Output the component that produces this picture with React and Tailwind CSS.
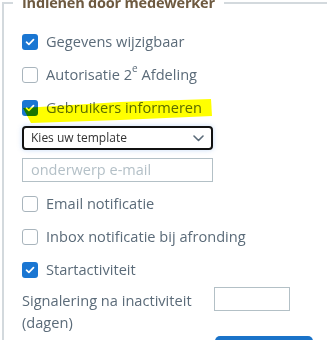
import React from "react";

function Check({ checked }) {
  if (checked) {
    return (
      <span className="flex h-[16px] w-[16px] shrink-0 items-center justify-center rounded-[3px] bg-[#1a76d2]">
        <svg width="10" height="8" viewBox="0 0 10 8" fill="none">
          <path d="M1.5 4.2 L3.9 6.3 L8.5 1.7" stroke="#fff" strokeWidth="1.7" strokeLinecap="round" strokeLinejoin="round" />
        </svg>
      </span>
    );
  }
  return <span className="h-[16px] w-[16px] shrink-0 rounded-[3px] border border-[#a9b5bd] bg-white" />;
}

function Row({ checked, children, className = "" }) {
  return (
    <div className={"flex h-[33px] items-center gap-[8px] " + className}>
      <Check checked={checked} />
      <span className="whitespace-nowrap leading-none">{children}</span>
    </div>
  );
}

export default function App() {
  return (
    <div className="h-[340px] w-[327px] overflow-hidden bg-white text-[14.6px] text-[#5b6b79]" style={{ fontFamily: '"Open Sans", "Noto Sans", sans-serif' }}>
      <fieldset className="ml-[2px] mt-[-7px] w-[360px] border-l-2 border-t-2 border-[#d3d9dd] pb-[20px]">
        <legend className="ml-[9px] px-[9px] text-[14.5px] font-bold leading-[20px] tracking-[-0.2px] text-[#6e5a40]">
          Indienen door medewerker
        </legend>
        <div className="flex flex-col pl-[18px] pt-[12px]">
          <Row checked>Gegevens wijzigbaar</Row>
          <Row>
            Autorisatie 2<sup className="relative top-[-2px] align-super text-[10px]">e</sup> Afdeling
          </Row>
          <div className="relative">
            <Row checked>Gebruikers informeren</Row>
            <svg className="pointer-events-none absolute left-0 top-0 mix-blend-multiply" width="200" height="40" viewBox="0 0 200 40">
              <polygon points="1,17 98,11 189,8 190,25 98,29 9,32" fill="#ffff00" />
            </svg>
          </div>
          <div className="mt-[2px] flex h-[24px] w-[191px] items-center justify-between rounded-[4px] border-2 border-[#111] bg-white pl-[7px] pr-[7px] text-[12px] text-[#333] shadow-[0_0_5px_rgba(90,150,230,0.35)]">
            <span className="leading-none">Kies uw template</span>
            <svg width="11" height="7" viewBox="0 0 11 7" fill="none">
              <path d="M1 1 L5.5 5.5 L10 1" stroke="#5b6b79" strokeWidth="1.6" strokeLinecap="round" strokeLinejoin="round" />
            </svg>
          </div>
          <div className="mt-[8px] flex h-[24px] w-[191px] items-center border border-[#b3c0c6] bg-white pl-[8px] text-[14.5px] text-[#b4c0c7]">
            <span className="leading-none">onderwerp e-mail</span>
          </div>
          <Row className="mt-[5px]">Email notificatie</Row>
          <Row>Inbox notificatie bij afronding</Row>
          <Row checked>Startactiviteit</Row>
          <div className="flex items-start">
            <div className="w-[192px] pt-[3px] leading-[22px]">Signalering na inactiviteit (dagen)</div>
            <div className="mt-[1px] h-[24px] w-[76px] border border-[#b3c0c6] bg-white" />
          </div>
          <div className="mt-[3px] flex">
            <div className="ml-[193px] h-[34px] w-[98px] rounded-[5px] bg-[#1a73c9]" />
          </div>
        </div>
      </fieldset>
    </div>
  );
}
